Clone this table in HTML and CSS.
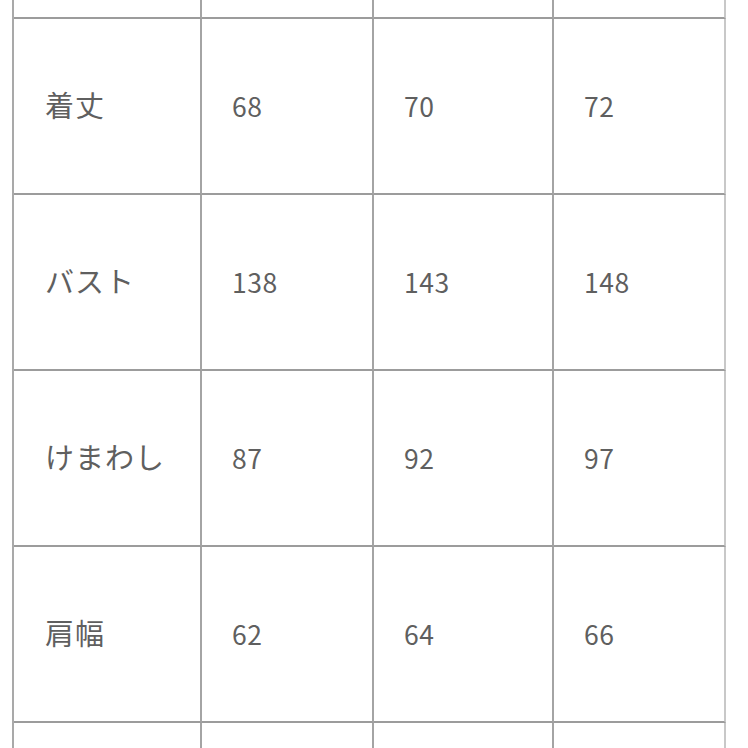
FILE: index.html
```html
<!DOCTYPE html>
<html lang="ja">
<head>
<meta charset="utf-8">
<link rel="stylesheet" href="styles.css">
</head>
<body>
<div class="table">
  <div class="cell top"></div><div class="cell top"></div><div class="cell top"></div><div class="cell top last"></div>
  <div class="cell">着丈</div><div class="cell num">68</div><div class="cell num">70</div><div class="cell num last">72</div>
  <div class="cell">バスト</div><div class="cell num">138</div><div class="cell num">143</div><div class="cell num last">148</div>
  <div class="cell">けまわし</div><div class="cell num">87</div><div class="cell num">92</div><div class="cell num last">97</div>
  <div class="cell">肩幅</div><div class="cell num">62</div><div class="cell num">64</div><div class="cell num last">66</div>
  <div class="cell"></div><div class="cell"></div><div class="cell"></div><div class="cell last"></div>
</div>
</body>
</html>
```
FILE: styles.css
```css
html, body {
  margin: 0;
  padding: 0;
  background: #ffffff;
}
body {
  width: 748px;
  height: 748px;
  overflow: hidden;
}
.table {
  margin-left: 12px;
  display: grid;
  grid-template-columns: 188px 172px 180px 172px;
  grid-template-rows: 19px repeat(5, 176px);
  border-left: 2px solid #a9a9a9;
  width: max-content;
}
.cell {
  box-sizing: border-box;
  border-right: 2px solid #a4a4a4;
  border-bottom: 2px solid #9c9c9c;
  display: flex;
  align-items: center;
  padding-left: 31px;
  padding-bottom: 4px;
  font-family: "Noto Sans CJK JP", "Noto Sans", sans-serif;
  font-size: 29px;
  color: #5f5f5f;
  letter-spacing: 1px;
}
.cell.num {
  font-size: 26.5px;
  letter-spacing: 0.5px;
  padding-left: 30px;
  padding-bottom: 1px;
}
.cell.last {
  border-right-color: #c8c8c8;
}
```
